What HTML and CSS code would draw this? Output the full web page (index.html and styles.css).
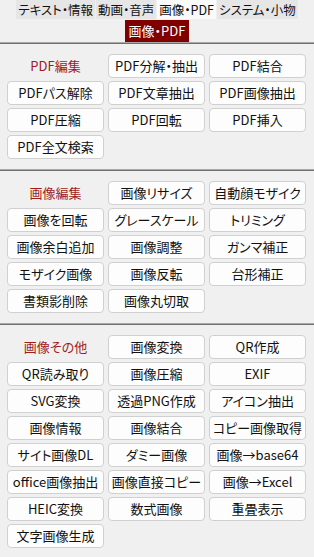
FILE: index.html
```html
<!DOCTYPE html>
<html>
<head>
    <meta charset="UTF-8">
    <title>画像・PDF</title>
    <link rel="stylesheet" href="styles.css">
</head>
<body>
    <div class="tabs">
        <div class="tab">テキスト・情報</div>
        <div class="tab">動画・音声</div>
        <div class="tab active">画像・PDF</div>
        <div class="tab">システム・小物</div>
    </div>
    <div class="subtabs">
        <div class="subtab">画像・PDF</div>
    </div>

    <div class="section">
        <div class="title">PDF編集</div>
        <div class="btn">PDF分解・抽出</div>
        <div class="btn">PDF結合</div>
        <div class="btn">PDFパス解除</div>
        <div class="btn">PDF文章抽出</div>
        <div class="btn">PDF画像抽出</div>
        <div class="btn">PDF圧縮</div>
        <div class="btn">PDF回転</div>
        <div class="btn">PDF挿入</div>
        <div class="btn">PDF全文検索</div>
    </div>

    <div class="section">
        <div class="title">画像編集</div>
        <div class="btn">画像リサイズ</div>
        <div class="btn">自動顔モザイク</div>
        <div class="btn">画像を回転</div>
        <div class="btn">グレースケール</div>
        <div class="btn">トリミング</div>
        <div class="btn">画像余白追加</div>
        <div class="btn">画像調整</div>
        <div class="btn">ガンマ補正</div>
        <div class="btn">モザイク画像</div>
        <div class="btn">画像反転</div>
        <div class="btn">台形補正</div>
        <div class="btn">書類影削除</div>
        <div class="btn">画像丸切取</div>
    </div>

    <div class="section">
        <div class="title">画像その他</div>
        <div class="btn">画像変換</div>
        <div class="btn">QR作成</div>
        <div class="btn">QR読み取り</div>
        <div class="btn">画像圧縮</div>
        <div class="btn">EXIF</div>
        <div class="btn">SVG変換</div>
        <div class="btn">透過PNG作成</div>
        <div class="btn">アイコン抽出</div>
        <div class="btn">画像情報</div>
        <div class="btn">画像結合</div>
        <div class="btn">コピー画像取得</div>
        <div class="btn">サイト画像DL</div>
        <div class="btn">ダミー画像</div>
        <div class="btn">画像→base64</div>
        <div class="btn">office画像抽出</div>
        <div class="btn">画像直接コピー</div>
        <div class="btn">画像→Excel</div>
        <div class="btn">HEIC変換</div>
        <div class="btn">数式画像</div>
        <div class="btn">重畳表示</div>
        <div class="btn">文字画像生成</div>
    </div>
</body>
</html>
```

FILE: styles.css
```css
body {
    margin: 0;
    background: #f0f0f0;
    color: #111;
    font-family: "Noto Sans CJK JP", "Liberation Sans", sans-serif;
    font-size: 13px;
    font-feature-settings: "palt";
}

.tabs {
    display: flex;
    justify-content: center;
    gap: 1px;
}

.tab {
    height: 19px;
    line-height: 19px;
    padding: 0 2px;
    font-size: 12.5px;
    background: #e6e6e6;
    white-space: nowrap;
}

.tab.active {
    background: #fafafa;
}

.subtabs {
    display: flex;
    justify-content: center;
    padding-top: 1px;
}

.subtab {
    height: 22px;
    line-height: 22px;
    padding: 0 4px;
    background: #800000;
    color: #fff;
}

.section {
    display: grid;
    grid-template-columns: repeat(3, 1fr);
    gap: 3px 4px;
    padding: 11px 8px 10px 7px;
    border-top: 1px solid #a8a8a8;
    box-shadow: inset 0 1px 0 #707070;
}

.title {
    height: 24px;
    line-height: 24px;
    text-align: center;
    color: #a01c1c;
}

.btn {
    height: 22px;
    line-height: 22px;
    text-align: center;
    background: #fdfdfd;
    border: 1px solid #d0d0d0;
    border-radius: 4px;
    white-space: nowrap;
}
```
